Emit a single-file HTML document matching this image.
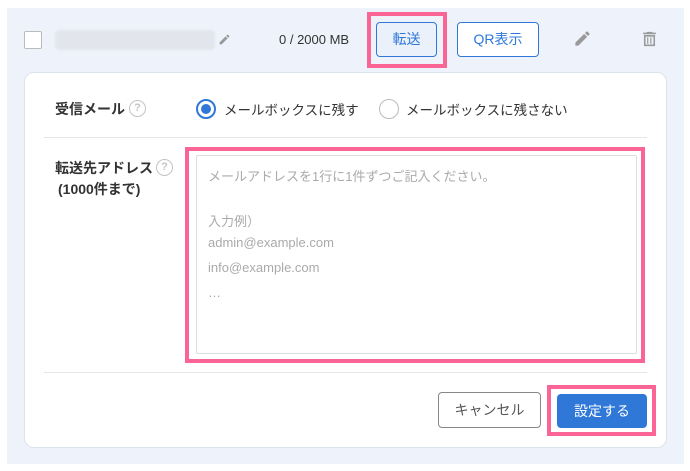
<!DOCTYPE html><html><head><meta charset="utf-8"><style>
*{box-sizing:border-box;margin:0;padding:0}
body{width:690px;height:471px;background:#fff;font-family:"Liberation Sans","Noto Sans CJK JP",sans-serif;position:relative;overflow:hidden;color:#333}
.a{position:absolute}
.panel{left:7px;top:8px;width:677px;height:456px;background:#eef3fb}
.card{left:24px;top:72px;width:643px;height:376px;background:#fff;border:1px solid #dde3ea;border-radius:10px}
.btn{border:1px solid #2f78d8;border-radius:4px;color:#2f78d8;font-size:14px;text-align:center;background:#fff}
.pink{border:4px solid #fb6595}
.q{width:17px;height:17px;border:1.5px solid #c4c4c4;border-radius:50%;color:#c4c4c4;font-size:11px;text-align:center;line-height:14px;font-weight:bold}
.ph{color:#aaa;font-size:13px;left:208px}
</style></head><body>
<div class="a panel"></div>
<div class="a" style="left:24px;top:31px;width:18px;height:18px;border:1.5px solid #bbb;background:#fff;border-radius:2px"></div>
<div class="a" style="left:55px;top:30px;width:160px;height:20px;background:#e2e6ec;border-radius:4px;filter:blur(1px)"></div>
<svg class="a" style="left:218px;top:33px" width="13" height="13" viewBox="0 0 24 24"><path d="M3 17.25V21h3.75L17.81 9.94l-3.75-3.75L3 17.25zM20.71 7.04a1 1 0 000-1.41l-2.34-2.34a1 1 0 00-1.41 0l-1.83 1.83 3.75 3.75 1.83-1.83z" fill="#999"/></svg>
<div class="a" style="left:279px;top:32px;font-size:13px;color:#333">0 / 2000 MB</div>
<div class="a pink" style="left:367px;top:12px;width:80px;height:56px"></div>
<div class="a btn" style="left:376px;top:22px;width:61px;height:35px;line-height:33px;background:#eaf1fb">転送</div>
<div class="a btn" style="left:457px;top:22px;width:82px;height:35px;line-height:33px">QR表示</div>
<svg class="a" style="left:573px;top:29px" width="19" height="19" viewBox="0 0 24 24"><path d="M3 17.25V21h3.75L17.81 9.94l-3.75-3.75L3 17.25zM20.71 7.04a1 1 0 000-1.41l-2.34-2.34a1 1 0 00-1.41 0l-1.83 1.83 3.75 3.75 1.83-1.83z" fill="#999"/></svg>
<svg class="a" style="left:640px;top:29px" width="19" height="20" viewBox="0 0 24 24"><path d="M15 3H9l-1 1H4v2h16V4h-4zM5 7v13a1 1 0 001 1h12a1 1 0 001-1V7zm2 2h10v10H7zm2 1v8h1.5v-8zm4 0v8h1.5v-8z" fill="#999"/></svg>
<div class="a card"></div>
<div class="a" style="left:55px;top:99px;font-size:14px;font-weight:bold">受信メール</div>
<div class="a q" style="left:129px;top:100px">?</div>
<div class="a" style="left:196px;top:99px;width:20px;height:20px;border:2px solid #2f78d8;border-radius:50%"><div style="margin:3px;width:10px;height:10px;border-radius:50%;background:#2f78d8"></div></div>
<div class="a" style="left:224px;top:99px;font-size:13.5px">メールボックスに残す</div>
<div class="a" style="left:379px;top:99px;width:20px;height:20px;border:1.5px solid #bbb;border-radius:50%"></div>
<div class="a" style="left:406px;top:99px;font-size:13.5px">メールボックスに残さない</div>
<div class="a" style="left:44px;top:137px;width:603px;height:1px;background:#e6e6e6"></div>
<div class="a" style="left:55px;top:158px;font-size:14px;font-weight:bold">転送先アドレス</div>
<div class="a q" style="left:156px;top:159px">?</div>
<div class="a" style="left:58px;top:179px;font-size:14px;font-weight:bold">(1000件まで)</div>
<div class="a pink" style="left:185px;top:147px;width:460px;height:216px"></div>
<div class="a" style="left:196px;top:155px;width:441px;height:199px;border:1px solid #ddd;border-radius:2px;background:#fff"></div>
<div class="a ph" style="top:166px">メールアドレスを1行に1件ずつご記入ください。</div>
<div class="a ph" style="top:211px">入力例）</div>
<div class="a ph" style="top:235px">admin@example.com</div>
<div class="a ph" style="top:260px">info@example.com</div>
<div class="a ph" style="top:285px">…</div>
<div class="a" style="left:44px;top:372px;width:603px;height:1px;background:#e6e6e6"></div>
<div class="a" style="left:438px;top:392px;width:103px;height:36px;border:1px solid #888;border-radius:4px;font-size:14px;color:#555;text-align:center;line-height:34px">キャンセル</div>
<div class="a pink" style="left:547px;top:385px;width:109px;height:51px"></div>
<div class="a" style="left:557px;top:394px;width:90px;height:34px;background:#2f78d8;border-radius:4px;color:#fff;font-size:14px;text-align:center;line-height:34px">設定する</div>
</body></html>
